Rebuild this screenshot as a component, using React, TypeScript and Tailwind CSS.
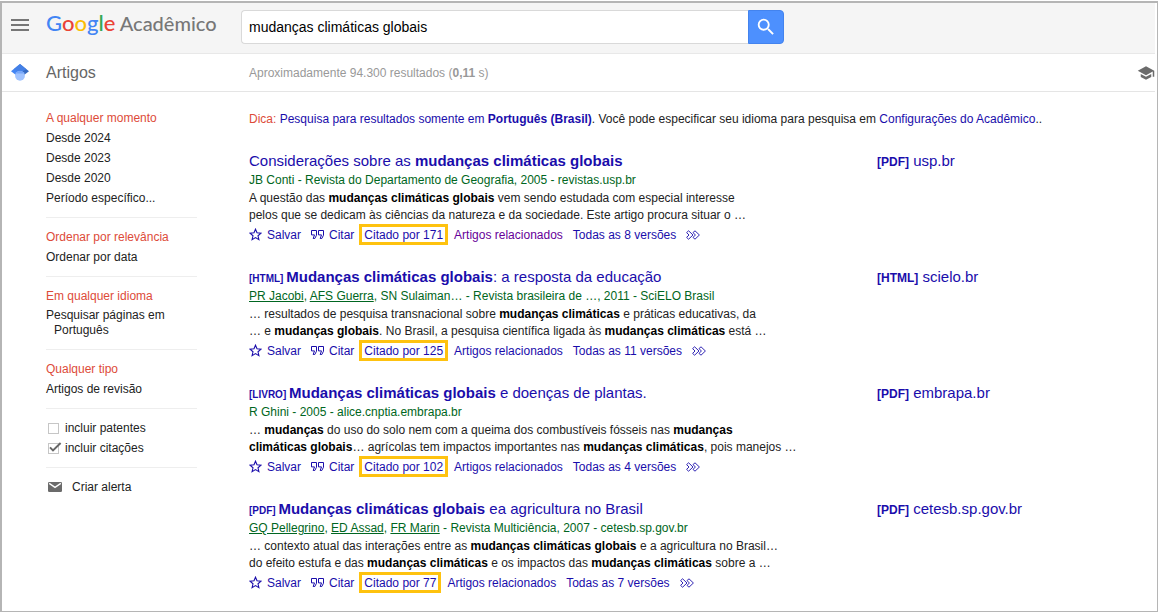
import { useState, type ReactNode } from 'react';
import { MdSchool, MdSearch } from 'react-icons/md';

type Result = {
  id: string;
  tag?: string;
  title: ReactNode;
  authors: ReactNode;
  snippet: ReactNode;
  citations: number;
  versions: number;
  relatedVisited?: boolean;
  source: { tag: string; host: string };
};

const results: Result[] = [
  {
    id: 'conti',
    title: <>Considerações sobre as <b>mudanças climáticas globais</b></>,
    authors: <>JB Conti - Revista do Departamento de Geografia, 2005 - revistas.usp.br</>,
    snippet: (
      <>
        A questão das <b>mudanças climáticas globais</b> vem sendo estudada com especial interesse
        <br />
        pelos que se dedicam às ciências da natureza e da sociedade. Este artigo procura situar o …
      </>
    ),
    citations: 171,
    versions: 8,
    relatedVisited: true,
    source: { tag: '[PDF]', host: 'usp.br' },
  },
  {
    id: 'jacobi',
    tag: '[HTML]',
    title: <><b>Mudanças climáticas globais</b>: a resposta da educação</>,
    authors: (
      <>
        <Author>PR Jacobi</Author>, <Author>AFS Guerra</Author>, SN Sulaiman… - Revista brasileira de …, 2011 - SciELO Brasil
      </>
    ),
    snippet: (
      <>
        … resultados de pesquisa transnacional sobre <b>mudanças climáticas</b> e práticas educativas, da
        <br />
        … e <b>mudanças globais</b>. No Brasil, a pesquisa científica ligada às <b>mudanças climáticas</b> está …
      </>
    ),
    citations: 125,
    versions: 11,
    source: { tag: '[HTML]', host: 'scielo.br' },
  },
  {
    id: 'ghini',
    tag: '[LIVRO]',
    title: <><b>Mudanças climáticas globais</b> e doenças de plantas.</>,
    authors: <>R Ghini - 2005 - alice.cnptia.embrapa.br</>,
    snippet: (
      <>
        … <b>mudanças</b> do uso do solo nem com a queima dos combustíveis fósseis nas <b>mudanças</b>
        <br />
        <b>climáticas globais</b>… agrícolas tem impactos importantes nas <b>mudanças climáticas</b>, pois manejos …
      </>
    ),
    citations: 102,
    versions: 4,
    source: { tag: '[PDF]', host: 'embrapa.br' },
  },
  {
    id: 'pellegrino',
    tag: '[PDF]',
    title: <><b>Mudanças climáticas globais</b> ea agricultura no Brasil</>,
    authors: (
      <>
        <Author>GQ Pellegrino</Author>, <Author>ED Assad</Author>, <Author>FR Marin</Author> - Revista Multiciência, 2007 - cetesb.sp.gov.br
      </>
    ),
    snippet: (
      <>
        … contexto atual das interações entre as <b>mudanças climáticas globais</b> e a agricultura no Brasil…
        <br />
        do efeito estufa e das <b>mudanças climáticas</b> e os impactos das <b>mudanças climáticas</b> sobre a …
      </>
    ),
    citations: 77,
    versions: 7,
    source: { tag: '[PDF]', host: 'cetesb.sp.gov.br' },
  },
];

function Author({ children }: { children: ReactNode }) {
  return <a href="#" className="underline">{children}</a>;
}

// ─── Ícones ────────────────────────────────────────────────────────────────
function MenuIcon() {
  return (
    <svg viewBox="0 0 18 12" className="h-3 w-[18px]" fill="#777">
      <path d="M0 0h18v2H0zM0 5h18v2H0zM0 10h18v2H0z" />
    </svg>
  );
}

function ScholarIcon() {
  return (
    <svg viewBox="0 0 18 17" className="h-[17px] w-[18px]">
      <path d="M9 0 0 7.2l4.6 3.6L9 12z" fill="#4285f4" />
      <path d="m9 0 9 7.2-4.6 3.6L9 12z" fill="#356ac3" />
      <path d="M2.6 5.2 9 0l6.4 5.2L9 8.5z" fill="#4480e6" />
      <circle cx="9" cy="11.8" r="4.9" fill="#a0c3ff" />
      <path d="M4.6 9.6a4.9 4.9 0 0 1 8.8 0z" fill="#76a7fa" />
    </svg>
  );
}

function StarIcon() {
  return (
    <svg viewBox="0 0 13 13" className="h-[13px] w-[13px]" fill="none" stroke="currentColor" strokeWidth="1.1">
      <path d="m6.5 1.2 1.5 3.6 4 .4-3 2.6.9 3.9-3.4-2.1-3.4 2.1.9-3.9-3-2.6 4-.4z" />
    </svg>
  );
}

function QuoteIcon() {
  return (
    <svg viewBox="0 0 13 11" className="h-[11px] w-[13px]" fill="none" stroke="currentColor">
      <path d="M.5 1.5h5v4.7L3.8 9.5H2.2l1.3-3.6h-3zM7.5 1.5h5v4.7l-1.7 3.3H9.2l1.3-3.6h-3z" />
    </svg>
  );
}

function MoreIcon() {
  return (
    <svg viewBox="0 0 14 10" className="h-[10px] w-[14px]" fill="none" stroke="currentColor" strokeWidth="0.9">
      <path d="M.6 2.6 2.6.8 7 5 2.6 9.2.6 7.4 3 5zM7 2.6 9 .8 13.4 5 9 9.2 7 7.4 9.4 5z" />
    </svg>
  );
}

function MailIcon() {
  return (
    <svg viewBox="0 0 14 10" className="h-[10px] w-[14px]">
      <rect width="14" height="10" rx="1.2" fill="#6b6b6b" />
      <path d="m1.2 1.4 5.8 4 5.8-4" fill="none" stroke="#fff" strokeWidth="1.3" />
    </svg>
  );
}

// ─── Barra lateral ─────────────────────────────────────────────────────────
function FilterGroup({ items }: { items: string[] }) {
  return (
    <ul className="border-b border-[#eee] py-[9px]">
      {items.map((item, i) => (
        <li key={item}>
          <a href="#" className={i === 0 ? 'text-[#dd4b39]' : ''}>{item}</a>
        </li>
      ))}
    </ul>
  );
}

function Check({ label, checked, onChange }: { label: string; checked: boolean; onChange: (v: boolean) => void }) {
  return (
    <label className="flex items-center gap-1.5 pl-0.5">
      <span className="relative flex h-[11px] w-[11px]">
        <input
          type="checkbox"
          checked={checked}
          onChange={(e) => onChange(e.target.checked)}
          className="h-[11px] w-[11px] appearance-none border border-[#c6c6c6] bg-white"
        />
        {checked && (
          <svg viewBox="0 0 13 11" className="pointer-events-none absolute -top-px left-px h-[11px] w-[13px]" fill="none" stroke="#666" strokeWidth="2">
            <path d="m1 5.4 3 3L11.6 1" />
          </svg>
        )}
      </span>
      {label}
    </label>
  );
}

function Sidebar() {
  const [patents, setPatents] = useState(false);
  const [citations, setCitations] = useState(true);

  return (
    <aside className="w-[203px] shrink-0 pr-[52px] pt-[7px] leading-5 text-[#222]">
      <FilterGroup items={['A qualquer momento', 'Desde 2024', 'Desde 2023', 'Desde 2020', 'Período específico...']} />
      <FilterGroup items={['Ordenar por relevância', 'Ordenar por data']} />
      <ul className="border-b border-[#eee] py-[9px]">
        <li><a href="#" className="text-[#dd4b39]">Em qualquer idioma</a></li>
        <li className="py-0.5 pl-2 -indent-2 leading-[15px]">
          <a href="#">Pesquisar páginas em<br />Português</a>
        </li>
      </ul>
      <FilterGroup items={['Qualquer tipo', 'Artigos de revisão']} />
      <div className="border-b border-[#eee] py-[9px]">
        <Check label="incluir patentes" checked={patents} onChange={setPatents} />
        <Check label="incluir citações" checked={citations} onChange={setCitations} />
      </div>
      <a href="#" className="flex items-center gap-[10px] py-[9px] pl-0.5">
        <MailIcon />
        Criar alerta
      </a>
    </aside>
  );
}

// ─── Resultados ────────────────────────────────────────────────────────────
function ResultItem({ result }: { result: Result }) {
  return (
    <article className="flex items-start">
      <div className="min-w-0 max-w-[628px] flex-1">
        <h3 className="text-[15px] leading-5 text-[#1a0dab]">
          <a href="#">
            {result.tag && <b className="text-[10px] leading-none">{result.tag} </b>}
            {result.title}
          </a>
        </h3>
        <p className="leading-[19px] text-[#006621]">{result.authors}</p>
        <p className="leading-[17px] text-[#222] [&_b]:text-black">{result.snippet}</p>
        <div className="flex h-[21px] items-center text-[#1a0dab]">
          <button type="button" className="flex items-center gap-[5px]"><StarIcon />Salvar</button>
          <button type="button" className="ml-[10px] flex items-center gap-[5px]"><QuoteIcon />Citar</button>
          <a href="#" className="ml-[5px] flex h-[21px] items-center border-[3px] border-[#fec20f] px-0.5">
            Citado por {result.citations}
          </a>
          <a href="#" className={result.relatedVisited ? 'ml-[6px] text-[#660099]' : 'ml-[6px]'}>Artigos relacionados</a>
          <a href="#" className="ml-[10px]">Todas as {result.versions} versões</a>
          <button type="button" aria-label="Mais" className="ml-[10px]"><MoreIcon /></button>
        </div>
      </div>
      <a href="#" className="text-[15px] leading-5 text-[#1a0dab]">
        <b className="text-[12px] leading-none">{result.source.tag}</b> {result.source.host}
      </a>
    </article>
  );
}

export default function App() {
  const [query, setQuery] = useState('mudanças climáticas globais');

  return (
    <div className="min-h-screen bg-white pt-px font-['Liberation_Sans',Arial,sans-serif] text-[12px]">
      <div className="mr-px min-h-[calc(100vh-1px)] border-2 border-b border-r border-[#b5b5b5]">
        {/* Cabeçalho */}
        <header className="mr-0.5 flex h-[51px] items-start border-b border-[#e8e8e8] bg-[#f5f5f5] pl-[9px] pt-[7px]">
          <button type="button" aria-label="Menu" className="mt-[9px] w-[35px]"><MenuIcon /></button>
          <a href="#" className="w-[195px] font-['Lato',sans-serif] text-[20px] font-medium leading-[26px] text-[#777]">
            <span className="text-[22px] leading-none">
              <span className="text-[#4285f4]">G</span>
              <span className="text-[#ea4335]">o</span>
              <span className="text-[#fbbc05]">o</span>
              <span className="text-[#4285f4]">g</span>
              <span className="text-[#34a853]">l</span>
              <span className="text-[#ea4335]">e</span>
            </span>{' '}
            Acadêmico
          </a>
          <form className="flex h-[34px] max-w-[543px] flex-1" onSubmit={(e) => e.preventDefault()}>
            <input
              type="text"
              aria-label="Pesquisar"
              value={query}
              onChange={(e) => setQuery(e.target.value)}
              className="min-w-0 flex-1 rounded-l-sm border border-r-0 border-[#d9d9d9] bg-white px-[7px] text-[14px] text-black outline-none"
            />
            <button type="submit" aria-label="Buscar" className="flex w-9 items-center justify-center rounded-r-sm border border-[#4383ee] bg-[#4d90fe] text-white">
              <MdSearch size={22} />
            </button>
          </form>
        </header>

        <div className="mr-0.5 flex h-[38px] items-center border-b border-[#e5e5e5] pl-[9px]">
          <span className="w-[35px]"><ScholarIcon /></span>
          <h1 className="w-[203px] text-[16px] text-[#666]">Artigos</h1>
          <p className="flex-1 text-[#999]">Aproximadamente 94.300 resultados (<b>0,11</b> s)</p>
          <a href="#" aria-label="Meu perfil" className="text-[#6b6b6b]"><MdSchool size={18} /></a>
        </div>

        <div className="flex pl-[44px]">
          <Sidebar />
          <main className="min-w-0 flex-1">
            <p className="mt-[17px] leading-5 text-[#222]">
              <span className="text-[#dd4b39]">Dica:</span>{' '}
              <a href="#" className="text-[#1a0dab]">Pesquisa para resultados somente em <b>Português (Brasil)</b></a>. Você pode
              especificar seu idioma para pesquisa em <a href="#" className="text-[#1a0dab]">Configurações do Acadêmico</a>..
            </p>
            <div className="mt-[22px] flex flex-col gap-[22px]">
              {results.map((r) => <ResultItem key={r.id} result={r} />)}
            </div>
          </main>
        </div>
      </div>
    </div>
  );
}
